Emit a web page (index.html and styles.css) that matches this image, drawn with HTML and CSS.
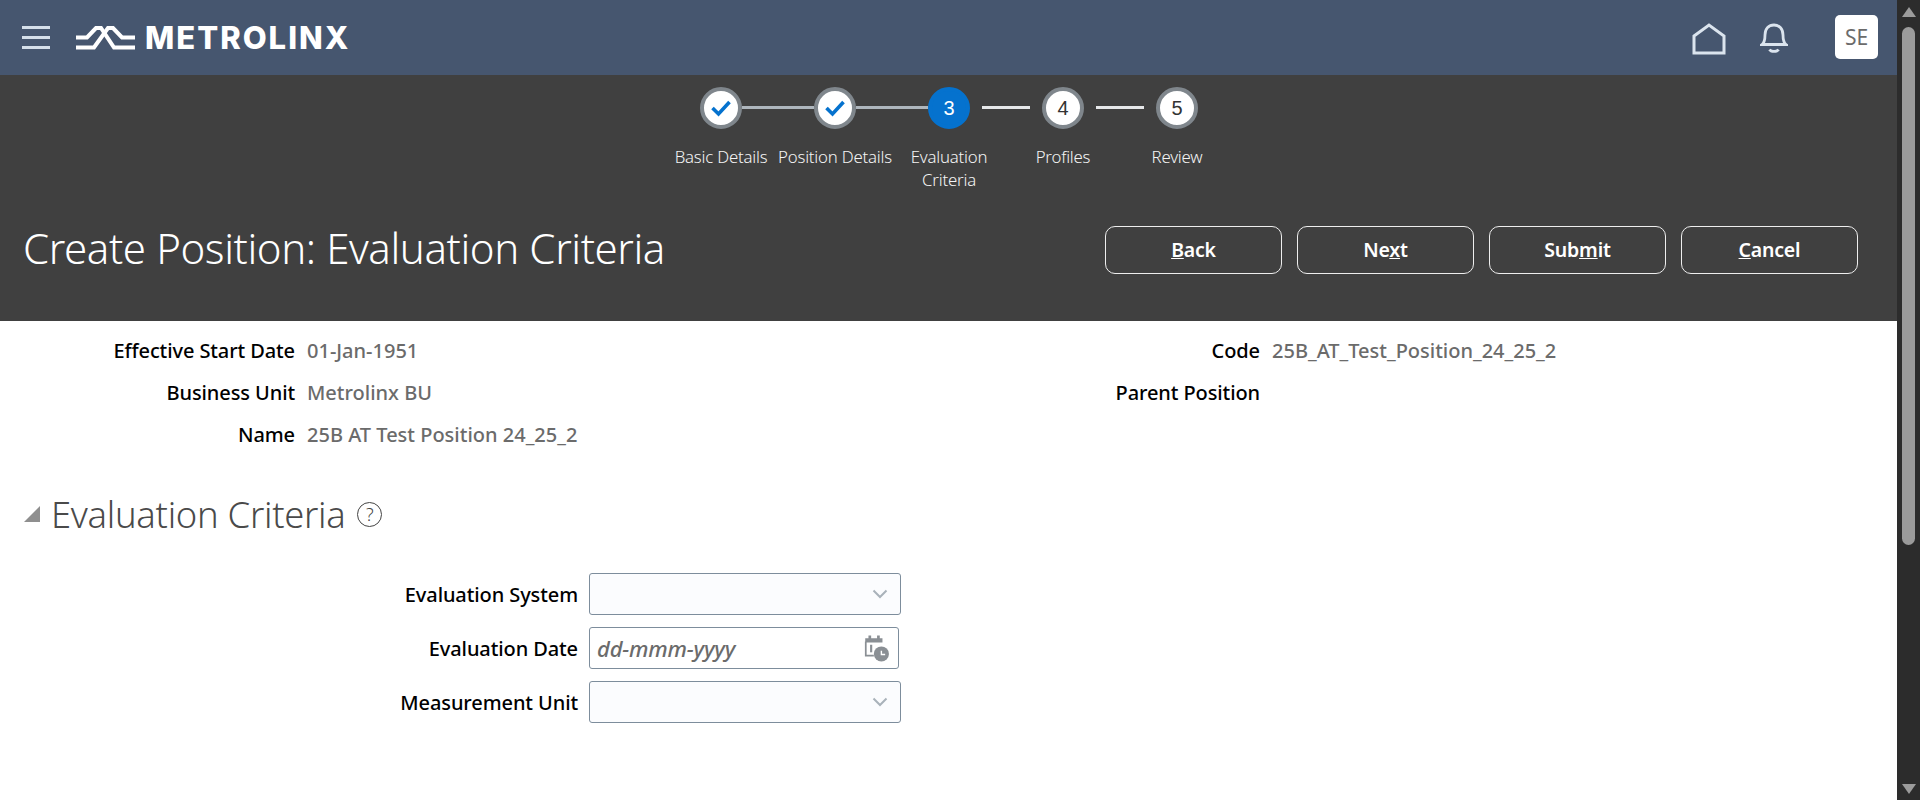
FILE: index.html
```html
<!DOCTYPE html>
<html lang="en">
<head>
    <meta charset="UTF-8">
    <title>Create Position: Evaluation Criteria</title>
    <link rel="stylesheet" href="styles.css">
</head>
<body>
    <div class="page">
        <header class="topbar">
            <div class="hamburger"><span></span><span></span><span></span></div>
            <svg class="logo-mark" width="60" height="26" viewBox="0 0 60 26" fill="none" stroke="#fff" stroke-width="4">
                <path d="M1 12.500H12L21 3H26L39 22.500H60"/>
                <path d="M1 22.500H19L33 3H38L47 12.500H60"/>
            </svg>
            <span class="logo-text">METROLINX</span>
            <div class="topbar-right">
                <svg class="home-icon" width="34" height="32" viewBox="0 0 34 32" fill="none" stroke="#dbe4ee" stroke-width="3">
                    <path d="M2 13L17 2L32 13V30H2Z"/>
                </svg>
                <svg class="bell-icon" width="28" height="31" viewBox="0 0 28 31" fill="none" stroke="#dbe4ee" stroke-width="2.800">
                    <path d="M2 21.500H26C23.500 19.500 23 17 23 12C23 5.500 19 2 14 2C9 2 5 5.500 5 12C5 17 4.500 19.500 2 21.500Z"/>
                    <path d="M9.500 26.500C11 29 17 29 18.500 26.500"/>
                </svg>
                <div class="avatar">SE</div>
            </div>
        </header>

        <section class="band">
            <ol class="train">
                <li class="stop done">
                    <div class="rail"><span class="dot"><svg width="22" height="18" viewBox="0 0 22 18" fill="none" stroke="#0572ce" stroke-width="3.600"><path d="M2.500 9L8.500 15L19.500 3"/></svg></span></div>
                    <span class="stop-label">Basic Details</span>
                </li>
                <li class="stop done">
                    <div class="rail"><span class="dot"><svg width="22" height="18" viewBox="0 0 22 18" fill="none" stroke="#0572ce" stroke-width="3.600"><path d="M2.500 9L8.500 15L19.500 3"/></svg></span></div>
                    <span class="stop-label">Position Details</span>
                </li>
                <li class="stop current">
                    <div class="rail"><span class="dot">3</span></div>
                    <span class="stop-label">Evaluation Criteria</span>
                </li>
                <li class="stop next">
                    <div class="rail"><span class="dot">4</span></div>
                    <span class="stop-label">Profiles</span>
                </li>
                <li class="stop next last">
                    <div class="rail"><span class="dot">5</span></div>
                    <span class="stop-label">Review</span>
                </li>
            </ol>
            <div class="title-row">
                <h1>Create Position: Evaluation Criteria</h1>
                <div class="actions">
                    <button><u>B</u>ack</button>
                    <button>Ne<u>x</u>t</button>
                    <button>Sub<u>m</u>it</button>
                    <button><u>C</u>ancel</button>
                </div>
            </div>
        </section>

        <main class="content">
            <div class="summary">
                <dl class="summary-col left">
                    <div class="row"><dt>Effective Start Date</dt><dd>01-Jan-1951</dd></div>
                    <div class="row"><dt>Business Unit</dt><dd>Metrolinx BU</dd></div>
                    <div class="row"><dt>Name</dt><dd>25B AT Test Position 24_25_2</dd></div>
                </dl>
                <dl class="summary-col right">
                    <div class="row"><dt>Code</dt><dd>25B_AT_Test_Position_24_25_2</dd></div>
                    <div class="row"><dt>Parent Position</dt><dd></dd></div>
                </dl>
            </div>

            <div class="section-head">
                <span class="disclosure"></span>
                <h2>Evaluation Criteria</h2>
                <span class="help">?</span>
            </div>

            <form class="criteria">
                <div class="field">
                    <label>Evaluation System</label>
                    <div class="box">
                        <svg width="16" height="10" viewBox="0 0 16 10" fill="none" stroke="#a9b2ba" stroke-width="2"><path d="M1.500 1.500L8 8L14.500 1.500"/></svg>
                    </div>
                </div>
                <div class="field">
                    <label>Evaluation Date</label>
                    <div class="box date">
                        <span class="placeholder">dd-mmm-yyyy</span>
                        <svg width="28" height="28" viewBox="0 0 26 26">
                            <path d="M3 4H19V8H3ZM6 1.500H8.500V5H6ZM14 1.500H16.500V5H14Z" fill="#8a8f94"/>
                            <path d="M3.500 7V20H11" fill="none" stroke="#8a8f94" stroke-width="1.600"/>
                            <rect x="7.500" y="10" width="2" height="7" fill="#8a8f94"/>
                            <circle cx="18" cy="18.500" r="7" fill="#8a8f94"/>
                            <path d="M18 15.500V19H21.500" fill="none" stroke="#fff" stroke-width="1.300"/>
                        </svg>
                    </div>
                </div>
                <div class="field">
                    <label>Measurement Unit</label>
                    <div class="box">
                        <svg width="16" height="10" viewBox="0 0 16 10" fill="none" stroke="#a9b2ba" stroke-width="2"><path d="M1.500 1.500L8 8L14.500 1.500"/></svg>
                    </div>
                </div>
            </form>
        </main>
    </div>

    <div class="scrollbar">
        <span class="arrow up"></span>
        <span class="thumb"></span>
        <span class="arrow down"></span>
    </div>
</body>
</html>
```

FILE: styles.css
```css
html, body {
    height: 100%;
}
body {
    margin: 0;
    display: flex;
    height: 800px;
    overflow: hidden;
    font-family: "Noto Sans", "Open Sans", sans-serif;
    font-size: 20px;
    background-color: white;
}
.page {
    flex: 1;
    min-width: 0;
}

/* top bar */
.topbar {
    height: 75px;
    background-color: #46566f;
    display: flex;
    align-items: center;
    padding-left: 22px;
}
.hamburger {
    display: flex;
    flex-direction: column;
    gap: 7px;
    width: 28px;
}
.hamburger span {
    height: 3px;
    background-color: #d5dfea;
}
.logo-mark {
    margin-left: 25px;
}
.logo-text {
    margin-left: 10px;
    font-family: Inter, sans-serif;
    font-weight: 800;
    font-size: 31px;
    letter-spacing: 2px;
    color: white;
}
.topbar-right {
    margin-left: auto;
    display: flex;
    align-items: center;
    padding-right: 19px;
}
.home-icon {
    margin-top: 2px;
}
.bell-icon {
    margin-left: 34px;
    margin-top: 1px;
}
.avatar {
    margin-left: 47px;
    width: 43px;
    height: 44px;
    border-radius: 5px;
    background-color: white;
    color: #6b6b6b;
    font-size: 21px;
    display: flex;
    align-items: center;
    justify-content: center;
    margin-top: -2px;
}

/* dark band with the train */
.band {
    height: 246px;
    background-color: #404040;
    box-sizing: border-box;
    padding-top: 12px;
}
.train {
    list-style: none;
    margin: 0 0 0 664px;
    padding: 0;
    display: flex;
}
.stop {
    width: 114px;
    display: flex;
    flex-direction: column;
    align-items: center;
}
.rail {
    width: 100%;
    display: flex;
    justify-content: center;
    position: relative;
    height: 42px;
}
.rail::after {
    content: "";
    position: absolute;
    top: 19px;
    left: calc(50% + 21px);
    width: 72px;
    height: 3px;
    background-color: #aeb6bd;
}
.next .rail::after,
.current .rail::after {
    left: calc(50% + 12px + 21px);
    width: 48px;
    background-color: #e6e8ea;
}
.last .rail::after {
    display: none;
}
.dot {
    width: 42px;
    height: 42px;
    box-sizing: border-box;
    border-radius: 50%;
    border: 4px solid #7f868c;
    background-color: white;
    color: #333;
    font-family: "Liberation Sans", sans-serif;
    font-size: 20px;
    display: flex;
    align-items: center;
    justify-content: center;
}
.current .dot {
    background-color: #0572ce;
    border-color: #0572ce;
    color: white;
}
.stop-label {
    margin-top: 16px;
    width: 96px;
    text-align: center;
    color: #f4f4f4;
    font-size: 16.800px;
    font-weight: 300;
    line-height: 23px;
    letter-spacing: -0.2px;
}
.done .stop-label {
    width: auto;
    white-space: nowrap;
}
.title-row {
    display: flex;
    align-items: center;
    justify-content: space-between;
    padding: 0 39px 0 23px;
    margin-top: 28px;
}
h1 {
    margin: 0 0 4px;
    color: white;
    font-weight: 300;
    font-size: 42px;
    letter-spacing: -0.4px;
}
.actions {
    display: flex;
    gap: 15px;
}
.actions button {
    width: 177px;
    height: 48px;
    background-color: transparent;
    border: 1px solid #eee;
    border-radius: 10px;
    color: white;
    font-family: inherit;
    font-size: 19.500px;
    font-weight: 600;
    letter-spacing: -0.2px;
    padding: 0;
}

/* read only summary */
.content {
    padding-top: 8px;
}
.summary {
    display: flex;
}
.summary-col {
    margin: 0;
}
.summary-col.left {
    width: 965px;
}
.row {
    display: flex;
    align-items: center;
    height: 42px;
}
dt {
    text-align: right;
    color: #000;
    font-weight: 500;
    letter-spacing: -0.1px;
}
.left dt {
    width: 295px;
}
.right dt {
    width: 295px;
}
dd {
    margin: 0 0 0 12px;
    color: #6b6b6b;
    font-weight: 500;
}

/* section */
.section-head {
    display: flex;
    align-items: center;
    margin-top: 37px;
    padding-left: 24px;
    height: 44px;
}
.disclosure {
    width: 0;
    height: 0;
    border-bottom: 16px solid #8f8f8f;
    border-left: 16px solid transparent;
}
h2 {
    margin: 0 0 0 11px;
    font-weight: 300;
    font-size: 36.400px;
    color: #4a4a4a;
    letter-spacing: -0.3px;
}
.help {
    margin-left: 12px;
    width: 23px;
    height: 23px;
    border: 1.500px solid #444;
    border-radius: 50%;
    display: flex;
    align-items: center;
    justify-content: center;
    font-size: 18px;
    font-weight: 300;
    color: #444;
}
.criteria {
    margin-top: 37px;
    display: flex;
    flex-direction: column;
    gap: 12px;
}
.field {
    display: flex;
    align-items: center;
}
.field label {
    width: 578px;
    padding-top: 1px;
    text-align: right;
    color: #000;
    font-weight: 500;
    letter-spacing: -0.1px;
}
.box {
    margin-left: 11px;
    width: 312px;
    height: 42px;
    box-sizing: border-box;
    border: 1px solid #7d8d9c;
    border-radius: 3px;
    background-color: #fbfcfe;
    display: flex;
    align-items: center;
    justify-content: flex-end;
    padding-right: 12px;
}
.box.date {
    width: 310px;
    background-color: white;
    justify-content: space-between;
    padding: 0 8px 0 7px;
}
.placeholder {
    color: #6b6b6b;
    font-style: italic;
    font-weight: 500;
    font-size: 22px;
    letter-spacing: -0.2px;
}

/* scrollbar */
.scrollbar {
    width: 23px;
    height: 800px;
    background-color: #2c2c2c;
    display: flex;
    flex-direction: column;
    align-items: center;
}
.arrow {
    width: 0;
    height: 0;
    border-left: 7px solid transparent;
    border-right: 7px solid transparent;
}
.arrow.up {
    margin-top: 7px;
    border-bottom: 10px solid #9b9b9b;
}
.arrow.down {
    margin-bottom: 6px;
    border-top: 10px solid #9b9b9b;
}
.thumb {
    width: 13px;
    height: 518px;
    margin-top: 10px;
    margin-bottom: auto;
    background-color: #9b9b9b;
    border-radius: 7px;
}
```
